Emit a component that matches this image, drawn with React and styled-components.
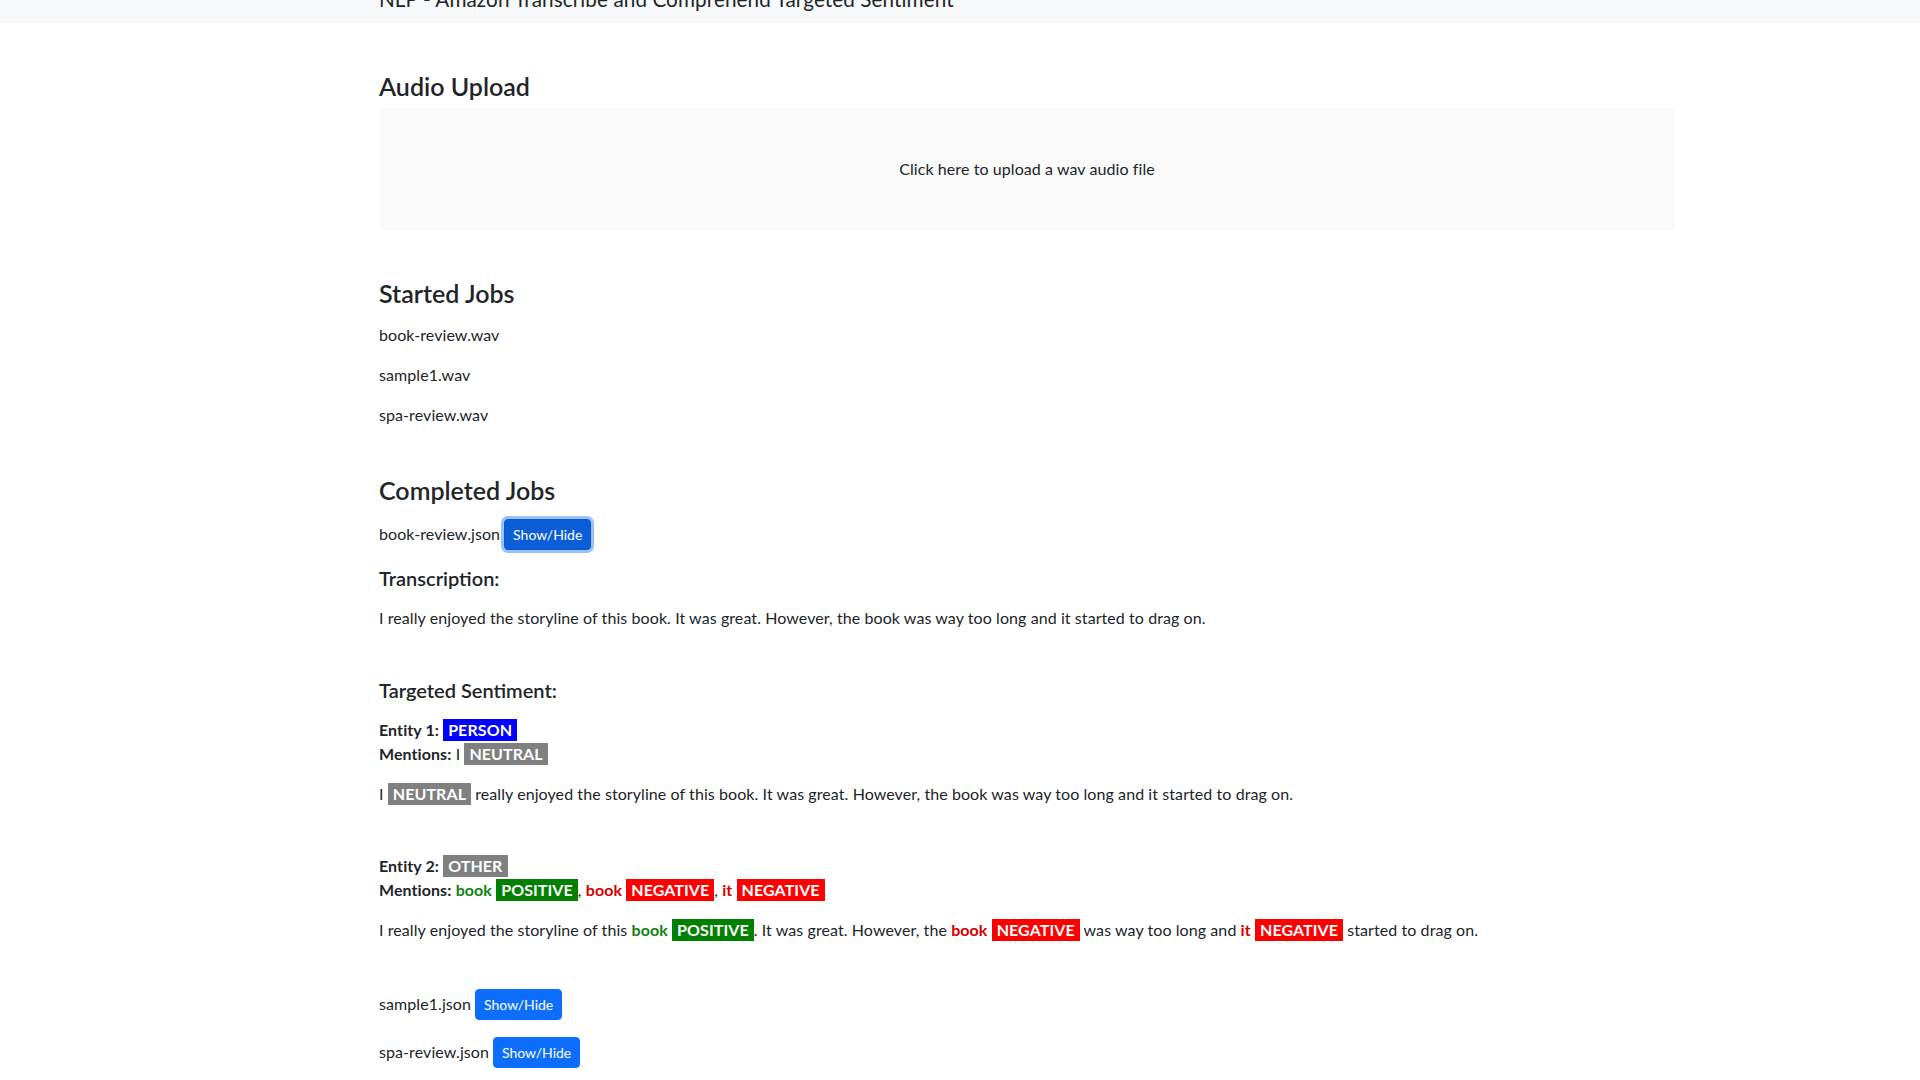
import { useState } from 'react'
import styled, { createGlobalStyle } from 'styled-components'

const GlobalStyle = createGlobalStyle`
	body {
		margin: 0;
		background: #fff;
		color: #212529;
		font-family: Lato, "Noto Sans", sans-serif;
		font-size: 16px;
		line-height: 1.5;
		letter-spacing: 0.08px;
	}
`
const Navbar = styled.nav`
	height: 23px;
	overflow: hidden;
	background-color: #f8f9fa;
`
const Brand = styled.div`
	margin: -14px 0 0 379px;
	font-size: 20.7px;
	line-height: 26px;
	white-space: nowrap;
`
const Container = styled.main`
	width: 1296px;
	margin-left: 379px;
	padding-bottom: 40px;
`
const SectionTitle = styled.h3`
	margin: 46px 0 ${props => props.$gap || 13}px;
	font-size: 25px;
	font-weight: 600;
	line-height: 34px;
	letter-spacing: 0;
`
const SubTitle = styled.h5`
	margin: ${props => props.$top || 16}px 0 16px;
	font-size: 20px;
	font-weight: 600;
	line-height: 24px;
	letter-spacing: 0;
`
const Dropzone = styled.div`
	height: 122px;
	display: flex;
	align-items: center;
	justify-content: center;
	background-color: #fafafa;
	border-radius: 4px;
	cursor: pointer;
`
const Row = styled.p`
	margin: 0 0 16px;
`
const JobRow = styled.div`
	display: flex;
	align-items: center;
	gap: 4px;
	height: 32px;
	margin: 0 0 16px;
`
const Button = styled.button`
	padding: 4px 8px;
	font-family: inherit;
	font-size: 14px;
	line-height: 21px;
	color: #fff;
	background-color: ${props => (props.$active ? '#0b5ed7' : '#0d6efd')};
	border: 1px solid ${props => (props.$active ? '#0a58ca' : '#0d6efd')};
	border-radius: 4px;
	box-shadow: ${props => (props.$active ? '0 0 0 3px rgba(49, 132, 253, 0.5)' : 'none')};
	cursor: pointer;
`
const Text = styled.p`
	margin: 0 0 ${props => props.$gap || 16}px;
`
const Strong = styled.b`
	font-weight: 700;
`
const Word = styled.b`
	font-weight: 700;
	color: ${props => props.$color};
`
const Badge = styled.span`
	display: inline-block;
	padding: 0 5px;
	font-weight: 700;
	line-height: 22px;
	color: #fff;
	background-color: ${props => props.$bg};
`

const colors = {
	PERSON: '#0000ff',
	OTHER: '#808080',
	NEUTRAL: '#808080',
	POSITIVE: '#008000',
	NEGATIVE: '#ff0000',
}
const wordColors = {
	POSITIVE: '#128212',
	NEGATIVE: '#d40000',
}

const Tag = ({ label }) => <Badge $bg={colors[label]}>{label}</Badge>

const Mention = ({ word, sentiment }) =>
	wordColors[sentiment] ? (
		<>
			<Word $color={wordColors[sentiment]}>{word}</Word> <Tag label={sentiment} />
		</>
	) : (
		<>
			{word} <Tag label={sentiment} />
		</>
	)

export default function App() {
	const [open, setOpen] = useState('book-review.json')
	const toggle = name => setOpen(open === name ? null : name)
	return (
		<>
			<GlobalStyle />
			<Navbar>
				<Brand>NLP - Amazon Transcribe and Comprehend Targeted Sentiment</Brand>
			</Navbar>
			<Container>
				<SectionTitle $gap={5}>Audio Upload</SectionTitle>
				<Dropzone>Click here to upload a wav audio file</Dropzone>

				<SectionTitle>Started Jobs</SectionTitle>
				<Row>book-review.wav</Row>
				<Row>sample1.wav</Row>
				<Row>spa-review.wav</Row>

				<SectionTitle $gap={11}>Completed Jobs</SectionTitle>
				<JobRow>
					book-review.json
					<Button $active onClick={() => toggle('book-review.json')}>Show/Hide</Button>
				</JobRow>
				{open === 'book-review.json' && (
					<>
						<SubTitle $top={2}>Transcription:</SubTitle>
						<Text>I really enjoyed the storyline of this book. It was great. However, the book was way too long and it started to drag on.</Text>

						<SubTitle $top={48}>Targeted Sentiment:</SubTitle>
						<Text $gap={16}>
							<Strong>Entity 1:</Strong> <Tag label="PERSON" />
							<br />
							<Strong>Mentions:</Strong> <Mention word="I" sentiment="NEUTRAL" />
						</Text>
						<Text $gap={48}>
							I <Tag label="NEUTRAL" /> really enjoyed the storyline of this book. It was great. However, the book was way too long and it started to drag on.
						</Text>

						<Text $gap={16}>
							<Strong>Entity 2:</Strong> <Tag label="OTHER" />
							<br />
							<Strong>Mentions:</Strong> <Mention word="book" sentiment="POSITIVE" />,{' '}
							<Mention word="book" sentiment="NEGATIVE" />, <Mention word="it" sentiment="NEGATIVE" />
						</Text>
						<Text $gap={46}>
							I really enjoyed the storyline of this <Mention word="book" sentiment="POSITIVE" />. It was great. However, the{' '}
							<Mention word="book" sentiment="NEGATIVE" /> was way too long and <Mention word="it" sentiment="NEGATIVE" /> started to drag on.
						</Text>
					</>
				)}
				<JobRow>
					sample1.json
					<Button onClick={() => toggle('sample1.json')}>Show/Hide</Button>
				</JobRow>
				<JobRow>
					spa-review.json
					<Button onClick={() => toggle('spa-review.json')}>Show/Hide</Button>
				</JobRow>
			</Container>
		</>
	)
}
